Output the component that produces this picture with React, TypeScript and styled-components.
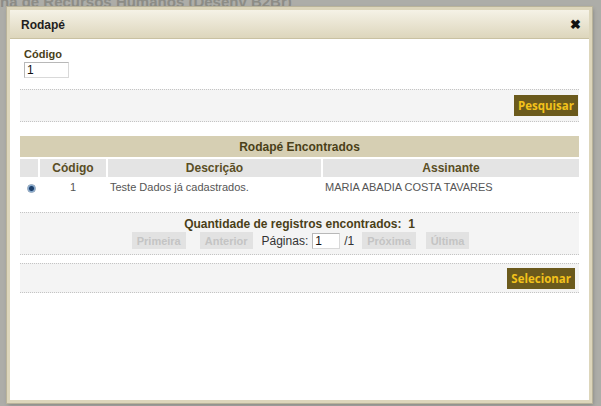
import { createGlobalStyle, styled } from "styled-components";

const GlobalStyle = createGlobalStyle`
  html, body {
    margin: 0;
    padding: 0;
    width: 601px;
    height: 406px;
    overflow: hidden;
    font-family: "Liberation Sans", Arial, sans-serif;
  }
`;

const Backdrop = styled.div`
  position: relative;
  width: 601px;
  height: 406px;
  background: #adada8;
  overflow: hidden;
`;

const PageTitle = styled.div`
  margin-top: -7px;
  font-size: 15px;
  font-weight: bold;
  color: #8c8c86;
  white-space: nowrap;
`;

const Dialog = styled.div`
  position: absolute;
  left: 7px;
  top: 7px;
  width: 579px;
  height: 390px;
  display: flex;
  flex-direction: column;
  background: #fff;
  border: 3px solid #ddd6bb;
  outline: 1px solid #b9b39a;
  box-shadow: 1px 2px 4px rgba(0, 0, 0, 0.25);
`;

const TitleBar = styled.div`
  height: 27px;
  display: flex;
  align-items: center;
  justify-content: space-between;
  padding: 1px 8px 0 11px;
  background: linear-gradient(#f5f2e6, #ddd6bc);
  border-bottom: 1px solid #c9c1a2;
  font-size: 12px;
  font-weight: bold;
  color: #1e1e1e;
`;

const CloseButton = styled.span`
  font-size: 13px;
  font-weight: bold;
  color: #111;
  line-height: 1;
`;

const Body = styled.div`
  flex: 1;
  padding: 9px 10px 0 10px;
  display: flex;
  flex-direction: column;
`;

const Field = styled.div`
  padding-left: 4px;
  display: flex;
  flex-direction: column;
  align-items: flex-start;
`;

const Label = styled.label`
  font-size: 11px;
  font-weight: bold;
  color: #4a3f18;
  margin-bottom: 2px;
`;

const TextInput = styled.input<{ $w: number }>`
  width: ${({ $w }) => $w}px;
  height: 16px;
  box-sizing: border-box;
  border: 1px solid #b8b8b8;
  border-right-color: #d9d9d9;
  border-bottom-color: #d9d9d9;
  font-family: "Liberation Sans", Arial, sans-serif;
  font-size: 12px;
  padding: 0 2px;
  color: #111;
  background: #fff;
`;

const Panel = styled.div<{ $mt: number; $h: number }>`
  margin-top: ${({ $mt }) => $mt}px;
  height: ${({ $h }) => $h}px;
  box-sizing: border-box;
  background: #f4f4f4;
  border-top: 1px dotted #c4c4c4;
  border-bottom: 1px dotted #c4c4c4;
  display: flex;
  flex-direction: column;
`;

const ActionRow = styled.div<{ $pr: number }>`
  flex: 1;
  display: flex;
  justify-content: flex-end;
  align-items: center;
  padding-right: ${({ $pr }) => $pr}px;
`;

const ActionButton = styled.button`
  height: 21px;
  padding: 0 4px;
  border: none;
  background: #6b5a1c;
  color: #f3c21b;
  font-family: "Open Sans", "Liberation Sans", sans-serif;
  font-size: 11.5px;
  font-weight: bold;
  cursor: pointer;
`;

const Table = styled.table`
  margin-top: 12px;
  width: 563px;
  border-collapse: separate;
  border-spacing: 2px;
  margin-left: -2px;
  font-size: 11px;
`;

const Caption = styled.th`
  background: #d6cfb3;
  height: 19px;
  font-size: 12px;
  font-weight: bold;
  color: #4a3f18;
  text-align: center;
`;

const HeadCell = styled.th<{ $w?: number }>`
  background: #e4e4e4;
  height: 18px;
  padding: 0;
  font-size: 12px;
  font-weight: bold;
  color: #5a4e25;
  text-align: center;
  width: ${({ $w }) => ($w ? `${$w}px` : "auto")};
`;

const Cell = styled.td<{ $center?: boolean }>`
  height: 16px;
  padding: 0 2px;
  color: #555;
  text-align: ${({ $center }) => ($center ? "center" : "left")};
`;

const Radio = styled.span`
  display: inline-block;
  width: 9px;
  height: 9px;
  border-radius: 50%;
  background: radial-gradient(circle, #1d3f6a 0 2px, #7fa7cf 3px, #dbe6f1 4px);
  border: 1px solid #8aa0b8;
  box-sizing: border-box;
  vertical-align: middle;
  margin-left: 5px;
`;

const PagerInfo = styled.div`
  text-align: center;
  font-size: 12px;
  font-weight: bold;
  color: #4a3f18;
  margin-top: 4px;
  white-space: pre;
`;

const PagerRow = styled.div`
  display: flex;
  justify-content: center;
  align-items: center;
  margin-top: 1px;
  padding-left: 2px;
  font-size: 12px;
  color: #333;
`;

const PagerButton = styled.button<{ $ml: number }>`
  height: 17px;
  margin-left: ${({ $ml }) => $ml}px;
  padding: 0 5px;
  border: none;
  background: #e2e2e2;
  color: #c4c4c4;
  font-family: "Liberation Sans", Arial, sans-serif;
  font-size: 11px;
  font-weight: bold;
`;

const PagerText = styled.span<{ $ml: number }>`
  margin-left: ${({ $ml }) => $ml}px;
`;

export default function App() {
  return (
    <>
      <GlobalStyle />
      <Backdrop>
        <PageTitle>na de Recursos Humanos (Desenv B2Br)</PageTitle>
        <Dialog>
          <TitleBar>
            <span>Rodapé</span>
            <CloseButton>✖</CloseButton>
          </TitleBar>
          <Body>
            <Field>
              <Label>Código</Label>
              <TextInput $w={45} defaultValue="1" />
            </Field>
            <Panel $mt={11} $h={33}>
              <ActionRow $pr={1}>
                <ActionButton>Pesquisar</ActionButton>
              </ActionRow>
            </Panel>
            <Table>
              <thead>
                <tr>
                  <Caption colSpan={4}>Rodapé Encontrados</Caption>
                </tr>
                <tr>
                  <HeadCell $w={18} />
                  <HeadCell $w={66}>Código</HeadCell>
                  <HeadCell $w={213}>Descrição</HeadCell>
                  <HeadCell>Assinante</HeadCell>
                </tr>
              </thead>
              <tbody>
                <tr>
                  <Cell>
                    <Radio />
                  </Cell>
                  <Cell $center>1</Cell>
                  <Cell>Teste Dados já cadastrados.</Cell>
                  <Cell>MARIA ABADIA COSTA TAVARES</Cell>
                </tr>
              </tbody>
            </Table>
            <Panel $mt={15} $h={43}>
              <PagerInfo>{"Quantidade de registros encontrados:  1"}</PagerInfo>
              <PagerRow>
                <PagerButton $ml={0}>Primeira</PagerButton>
                <PagerButton $ml={14}>Anterior</PagerButton>
                <PagerText $ml={9}>Páginas:</PagerText>
                <TextInput $w={28} defaultValue="1" style={{ marginLeft: 4 }} />
                <PagerText $ml={4}>/1</PagerText>
                <PagerButton $ml={8}>Próxima</PagerButton>
                <PagerButton $ml={10}>Última</PagerButton>
              </PagerRow>
            </Panel>
            <Panel $mt={8} $h={30}>
              <ActionRow $pr={4}>
                <ActionButton>Selecionar</ActionButton>
              </ActionRow>
            </Panel>
          </Body>
        </Dialog>
      </Backdrop>
    </>
  );
}
